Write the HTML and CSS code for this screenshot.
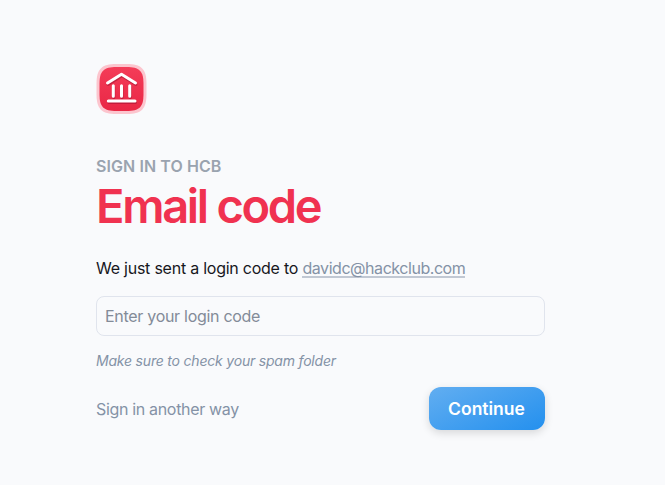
FILE: index.html
```html
<!DOCTYPE html>
<html lang="en">
<head>
<meta charset="utf-8">
<title>Sign in to HCB</title>
<link rel="stylesheet" href="styles.css">
</head>
<body>
<main class="login">
  <svg class="logo" viewBox="0 0 50 50" aria-hidden="true">
    <defs>
      <linearGradient id="red" x1="0" y1="0" x2="0" y2="1">
        <stop offset="0" stop-color="#f43c58"/>
        <stop offset="1" stop-color="#e92745"/>
      </linearGradient>
      <filter id="soft" x="-20%" y="-20%" width="140%" height="140%"><feGaussianBlur stdDeviation=".6"/></filter>
    </defs>
    <path fill="#fcc5ce" d="M20 0H30C45 0 50 5 50 20V30C50 45 45 50 30 50H20C5 50 0 45 0 30V20C0 5 5 0 20 0Z"/>
    <path fill="url(#red)" d="M20 3H30C43 3 47 7 47 20V30C47 43 43 47 30 47H20C7 47 3 43 3 30V20C3 7 7 3 20 3Z"/>
    <g class="bank shade" filter="url(#soft)" transform="translate(.5 1.2)"><path d="M11 19.300L25 10.500L39 19.300M16.800 22V32.500M25 22V32.500M33.200 22V32.500M12 37.200H38.500"/></g>
    <g class="bank"><path d="M11 19L25 10.200L39 19M16.800 21.700V32.200M25 21.700V32.200M33.200 21.700V32.200M11.800 37H38.500"/></g>
  </svg>
  <header class="heading">
    <p class="eyebrow">SIGN IN TO HCB</p>
    <h1 class="title">Email code</h1>
  </header>
  <form class="form">
    <p class="message">We just sent a login code to <a class="email">davidc@hackclub.com</a></p>
    <input class="code" type="text" placeholder="Enter your login code">
    <p class="hint">Make sure to check your spam folder</p>
    <div class="actions">
      <a class="alternate">Sign in another way</a>
      <button class="continue" type="button">Continue</button>
    </div>
  </form>
</main>
</body>
</html>
```
FILE: styles.css
```css
* { box-sizing: border-box; }
body {
  margin: 0;
  min-height: 485px;
  background: #f9fafc;
  color: #1f2d3d;
  font: 16px/24px Inter, "Liberation Sans", sans-serif;
}
p, h1 { margin: 0; }
.login { width: 448.500px; margin-left: 96px; padding-top: 64px; }
.logo { display: block; width: 51px; height: 50px; }
.bank { fill: none; stroke: #fff; stroke-width: 3; stroke-linecap: round; stroke-linejoin: round; }
.shade { stroke: #a81834; stroke-opacity: .6; }
.heading { margin-top: 40px; }
.eyebrow { color: #9aa3af; font-size: 16px; font-weight: 600; line-height: 24px; letter-spacing: .080px; }
.title { color: #f03250; font-size: 47px; font-weight: 570; line-height: 56px; letter-spacing: -2.300px; }
.form { display: flex; flex-direction: column; }
.message { height: 24px; margin-top: 22px; color: #17171d; line-height: 24px; letter-spacing: -.240px; }
.email { display: inline-block; color: #8492a6; letter-spacing: -.450px; line-height: 16px; border-bottom: 2px solid #c1c8d3; }
.code {
  width: 100%; height: 40px; margin-top: 16px; padding: 0 8px;
  border: 1px solid #e0e4ed; border-radius: 8px;
  background: #f9fafc; font: inherit; letter-spacing: -.290px; outline: none;
}
.code::placeholder { color: #838b98; opacity: 1; }
.hint { margin-top: 15px; color: #8492a6; font-size: 14px; font-style: italic; line-height: 20px; letter-spacing: -.200px; }
.actions { display: flex; align-items: center; justify-content: space-between; margin-top: 16px; }
.alternate { color: #8492a6; letter-spacing: -.330px; }
.continue {
  width: 116px; height: 43px; padding: 1px 0 0; border: 0; border-radius: 12px;
  background: linear-gradient(155deg, #62aef1, #2490ee);
  box-shadow: 0 3px 8px rgb(0 0 0 / .14);
  color: #fff; font: 600 17.500px/24px Inter, "Liberation Sans", sans-serif;
}
```
